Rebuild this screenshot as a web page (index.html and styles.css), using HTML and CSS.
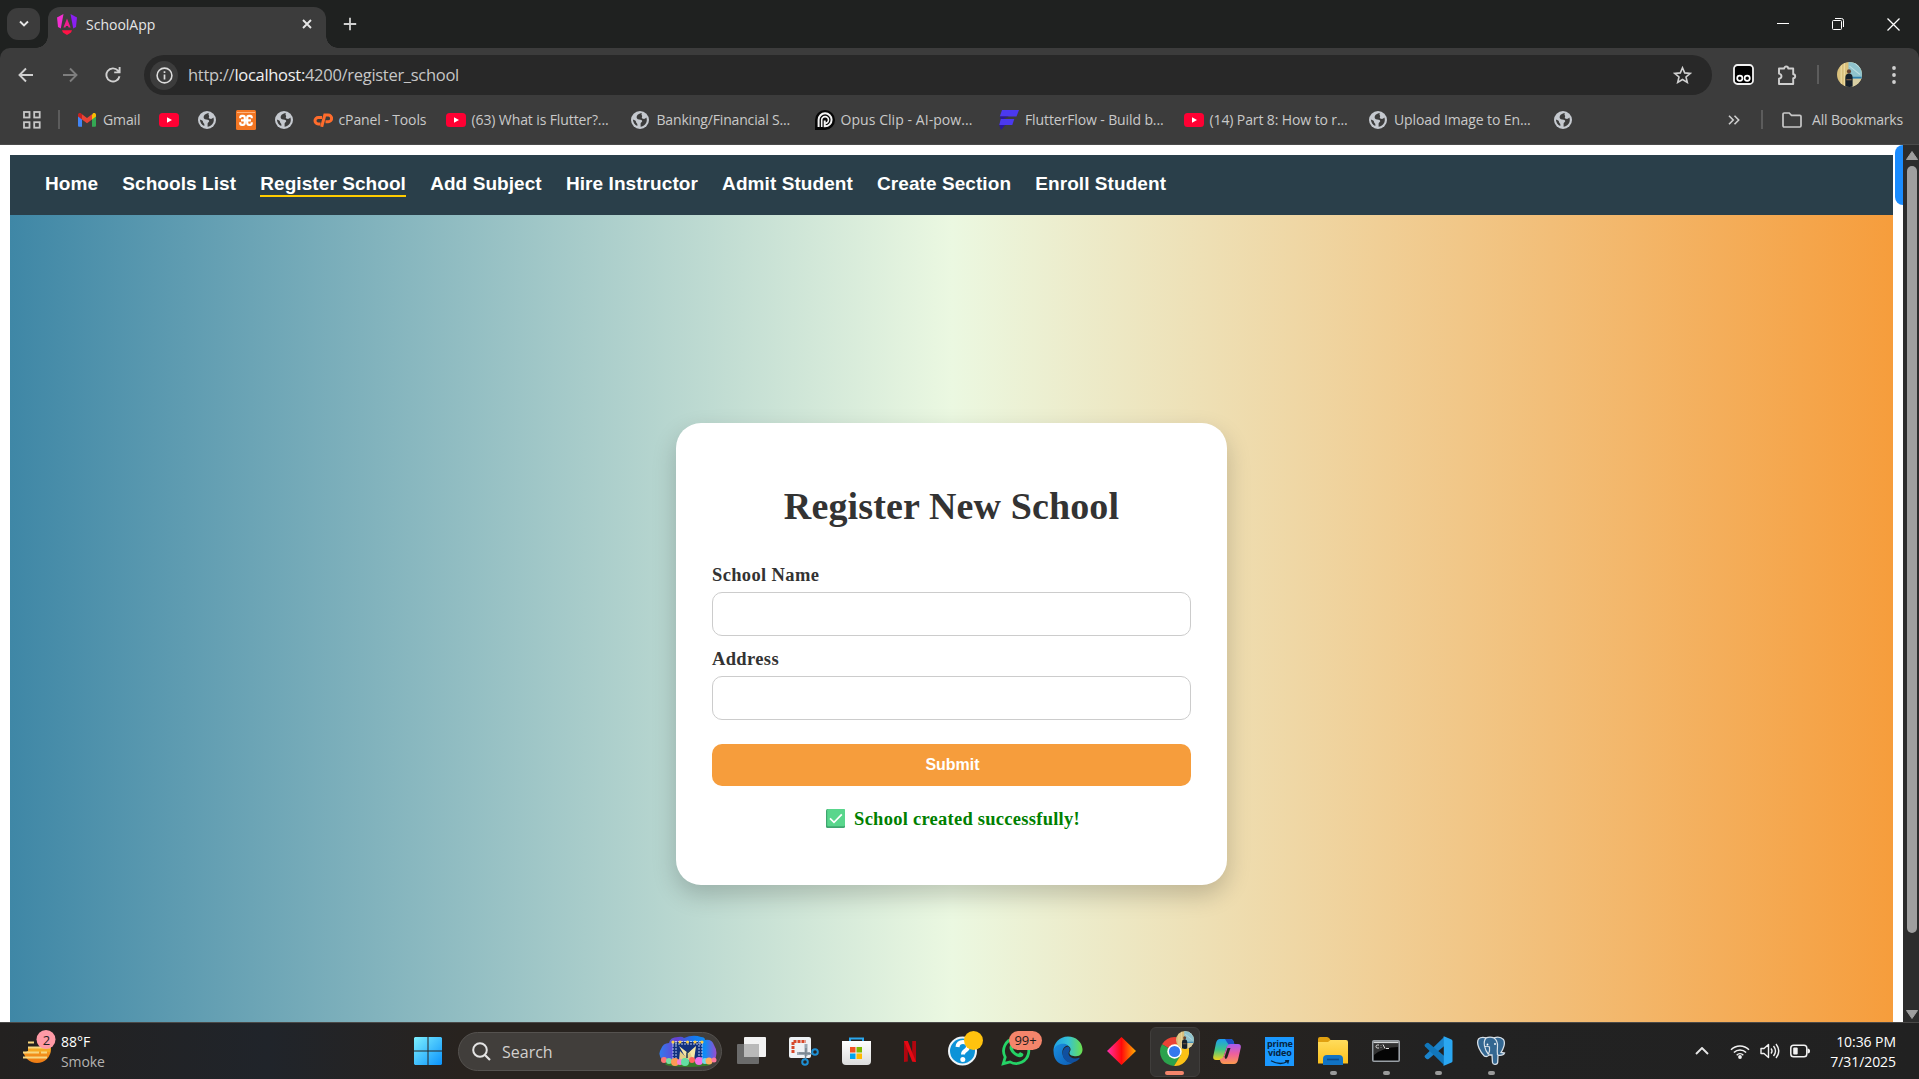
FILE: index.html
```html
<!DOCTYPE html>
<html lang="en">
<head>
<meta charset="utf-8">
<title>SchoolApp</title>
<link rel="stylesheet" href="styles.css">
</head>
<body>
<svg width="0" height="0" class="defs" aria-hidden="true">
  <defs>
    <linearGradient id="ang" x1="0" y1="0" x2="1" y2="0"><stop offset="0" stop-color="#f637d8"/><stop offset=".5" stop-color="#e0219b"/><stop offset="1" stop-color="#7a1df5"/></linearGradient>
    <linearGradient id="win" x1="0" y1="0" x2="1" y2="1"><stop offset="0" stop-color="#7df0ff"/><stop offset="1" stop-color="#0a92fb"/></linearGradient>
    <linearGradient id="sun" x1="0" y1="0" x2="0" y2="1"><stop offset="0" stop-color="#fbc22c"/><stop offset="1" stop-color="#ee7a14"/></linearGradient>
    <linearGradient id="kite" x1="0" y1="0" x2="1" y2="0"><stop offset="0" stop-color="#ff2fae"/><stop offset=".5" stop-color="#ff0a0a"/><stop offset="1" stop-color="#ffb000"/></linearGradient>
    <linearGradient id="cloud" x1="0" y1="0" x2="1" y2="0"><stop offset="0" stop-color="#2f7bef"/><stop offset=".3" stop-color="#6a3fd0"/><stop offset=".6" stop-color="#1479ee"/><stop offset=".8" stop-color="#0f8cf5"/><stop offset="1" stop-color="#9a4bd0"/></linearGradient>
    <linearGradient id="edgeTop" x1="0" y1="0" x2="1" y2="0"><stop offset="0" stop-color="#1f9fe4"/><stop offset=".5" stop-color="#35c1d8"/><stop offset="1" stop-color="#6ce04b"/></linearGradient>
    <linearGradient id="edgeLow" x1="0" y1="0" x2="1" y2="1"><stop offset="0" stop-color="#1a8fe0"/><stop offset="1" stop-color="#0d5cb5"/></linearGradient>
    <linearGradient id="copL" x1="0" y1="0" x2="0" y2="1"><stop offset="0" stop-color="#1d9bf0"/><stop offset=".5" stop-color="#3cc48a"/><stop offset="1" stop-color="#f2d21c"/></linearGradient>
    <linearGradient id="copR" x1="0" y1="0" x2="0" y2="1"><stop offset="0" stop-color="#a75cf0"/><stop offset=".5" stop-color="#ef5f9c"/><stop offset="1" stop-color="#fb9a4e"/></linearGradient>
    <linearGradient id="fold" x1="0" y1="0" x2="0" y2="1"><stop offset="0" stop-color="#ffdc5c"/><stop offset="1" stop-color="#fbc01d"/></linearGradient>
    <linearGradient id="bag" x1="0" y1="0" x2="0" y2="1"><stop offset="0" stop-color="#fff"/><stop offset="1" stop-color="#dcdcdc"/></linearGradient>
    <symbol id="globe" viewBox="0 0 18 18"><circle cx="9" cy="9" r="9" fill="#c5c9cf"/><path d="M9.500 2.200C7.200 3 5.600 4.300 5.600 6.200c0 2 2.200 2.200 4 2.500 1.300.2 1.900.9 1.500 1.900-.3.9-1.500 1-1.500 2.200v2.900c3.500-.5 6.200-3.300 6.200-6.800 0-.9-.2-1.700-.5-2.400-.8 1.100-1.900 1.600-3.200 1.300-1.400-.3-1.500-1.500-1-2.400.4-.8-.6-1-.6-1.900 0-.6.3-1 .6-1.300z M1.900 8.600c.1 3 1.800 5.300 4.400 6.500.2-1.200.2-2-.6-2.800-1-.9-.4-2.200-1.500-2.700-.8-.4-1.600-.5-2.300-1z" fill="#3c3c3c"/></symbol>
    <symbol id="yt" viewBox="0 0 20 14"><rect width="20" height="14" rx="3.500" fill="#ff0033"/><path d="M8 4.200v5.600L13 7z" fill="#fff"/></symbol>
    <symbol id="person" viewBox="0 0 24 24"><clipPath id="pc"><circle cx="12" cy="12" r="12"/></clipPath><g clip-path="url(#pc)"><rect width="24" height="24" fill="#d9c07c"/><path d="M4 0v24M7 0v24" stroke="#f0dfa8"/><rect x="11" width="13" height="16" fill="#8fc3cd"/><path d="M12 4l10 8M16 0l8 7" stroke="#b9dde0"/><rect x="13" y="16" width="11" height="8" fill="#d8cfa4"/><path d="M14 15h10" stroke="#2f7fae" stroke-width="1.500"/><circle cx="11.500" cy="9" r="2" fill="#6a4530"/><path d="M8 24v-9c0-3 1.500-4 3.500-4s3.500 1 3.500 4v9z" fill="#16202b"/><path d="M9 17h5" stroke="#946b4b"/></g></symbol>
  </defs>
</svg>

<header class="chrome">
  <div class="tabstrip">
    <button class="tab-search"><svg width="12" height="8" viewBox="0 0 12 8"><path d="M2 1.500l4 4 4-4" class="ln2"/></svg></button>
    <div class="tab">
      <svg width="20" height="21" viewBox="0 0 20 21"><path d="M0 3.500L6.500 0 3.800 14.500 1 13z" fill="#f32fd0"/><path d="M20 3.500L13.500 0l2.700 14.500L19 13z" fill="#8a1ff2"/><path d="M10 4.500l3.600 9h-2l-.6-1.600H9l-.6 1.600h-2z" fill="#f01e8c"/><path d="M5 16.200h10l-1 2.300L10 21l-4-2.500z" fill="#ff1245"/></svg>
      <span class="tab-title">SchoolApp</span>
      <svg width="10" height="10" viewBox="0 0 10 10" class="tab-close"><path d="M1 1l8 8M9 1L1 9" class="ln2"/></svg>
    </div>
    <svg width="14" height="14" viewBox="0 0 14 14" class="new-tab"><path d="M7 .8v12.400M.8 7h12.400" fill="none" stroke="#d0d0d0" stroke-width="1.800"/></svg>
    <div class="win-controls">
      <svg width="12" height="12" viewBox="0 0 12 12"><path d="M0 5.500h12" class="ln1"/></svg>
      <svg width="12" height="12" viewBox="0 0 12 12"><rect x=".5" y="2.500" width="9" height="9" rx="1" class="ln1"/><path d="M3 .5h6.500a2 2 0 0 1 2 2V9" class="ln1"/></svg>
      <svg width="13" height="13" viewBox="0 0 13 13"><path d="M.5.500l12 12M12.500.500l-12 12" class="ln1 bright"/></svg>
    </div>
  </div>

  <div class="toolbar">
    <div class="slot"><svg width="16" height="16" viewBox="0 0 16 16"><path d="M15 8H1.800M8 1.500L1.500 8 8 14.500" fill="none" stroke="#d0d0d0" stroke-width="1.900"/></svg></div>
    <div class="slot"><svg width="16" height="16" viewBox="0 0 16 16"><path d="M1 8h13.200M8 1.500L14.500 8 8 14.500" fill="none" stroke="#7e7e7e" stroke-width="1.900"/></svg></div>
    <div class="slot reload"><svg width="16" height="16" viewBox="0 0 16 16"><path d="M14.500 9.200A6.600 6.600 0 1 1 13 3.600l1.500 1.600M14.600 0v5.400H9.200" fill="none" stroke="#d0d0d0" stroke-width="1.900"/></svg></div>
    <div class="omnibox">
      <span class="info"><svg width="17" height="17" viewBox="0 0 17 17"><circle cx="8.500" cy="8.500" r="7.400" fill="none" stroke="#dcdcdc" stroke-width="1.600"/><path d="M8.500 7.500v5M8.500 4.300v1.800" stroke="#dcdcdc" stroke-width="1.700"/></svg></span>
      <span class="url">http://<b>localhost:</b>4200/register_school</span>
      <svg width="19" height="18" viewBox="0 0 19 18" class="star"><path d="M9.500 1.800l2.200 5.100 5.500.5-4.200 3.600 1.300 5.400-4.800-2.900-4.800 2.900L6 11 1.800 7.400l5.500-.5z" fill="none" stroke="#d0d0d0" stroke-width="1.600"/></svg>
    </div>
    <div class="slot"><svg width="21" height="21" viewBox="0 0 21 21"><rect x="1" y="1" width="19" height="19" rx="3.500" fill="#000" stroke="#f2f2f2" stroke-width="1.800"/><circle cx="6.800" cy="14.200" r="2.600" fill="none" stroke="#fff" stroke-width="1.700"/><circle cx="14.200" cy="14.200" r="2.600" fill="none" stroke="#fff" stroke-width="1.700"/></svg></div>
    <div class="slot"><svg width="20" height="20" viewBox="0 0 20 20"><path d="M2 3.500h5.200a2 2 0 0 1 4 0h5V9.200a2 2 0 0 1 0 4V19H2v-5.200c3.300-.6 3.300-4.600 0-5.200z" fill="none" stroke="#cfcfcf" stroke-width="1.900" stroke-linejoin="round"/></svg></div>
    <div class="slot sepslot"><i class="vsep"></i></div>
    <div class="slot avslot"><svg width="25" height="25"><use href="#person"/></svg></div>
    <div class="slot menuslot"><svg width="4" height="18" viewBox="0 0 4 18"><g fill="#d0d0d0"><circle cx="2" cy="2" r="1.900"/><circle cx="2" cy="9" r="1.900"/><circle cx="2" cy="16" r="1.900"/></g></svg></div>
  </div>

  <div class="bookmarks">
    <svg width="18" height="18" viewBox="0 0 18 18" class="apps"><g fill="none" stroke="#c7c7c7" stroke-width="1.800"><rect x="1" y="1" width="5.500" height="5.500"/><rect x="11.200" y="1" width="5.500" height="5.500"/><rect x="1" y="11.200" width="5.500" height="5.500"/><rect x="11.200" y="11.200" width="5.500" height="5.500"/></g></svg>
    <i class="vsep"></i>
    <ul>
      <li><svg width="20" height="20" viewBox="0 0 20 20"><path d="M1 4.500v11c0 .8.500 1.300 1.300 1.300H5V8z" fill="#4285f4"/><path d="M19 4.500v11c0 .8-.5 1.300-1.300 1.300H15V8z" fill="#34a853"/><path d="M15 4.800V9.500l4-3V5c0-1.800-2-2.400-3.200-1.400z" fill="#fbbc04"/><path d="M5 9.500V4.300l5 3.800 5-3.800v5.200l-5 3.800z" fill="#ea4335"/><path d="M1 5c0-1.800 2-2.400 3.200-1.400l.8.700v5.200l-4-3z" fill="#c5221f"/></svg><span class="gm">Gmail</span></li>
      <li><svg width="20" height="14"><use href="#yt"/></svg></li>
      <li><svg width="20" height="18"><use href="#globe"/></svg></li>
      <li><svg width="20" height="20" viewBox="0 0 20 20"><rect width="20" height="20" rx="1.500" fill="#f37623"/><path d="M1 2.500h18" stroke="#ffb27c" stroke-width="1"/><path d="M4.300 8.300V7.300Q4.300 5.800 5.800 5.800H7Q8.800 5.800 8.800 7.800v5q0 2-1.800 2H5.800q-1.500 0-1.500-1.500v-1M5 10.300h10M15.700 8.300V7.300q0-1.500-1.500-1.500H13q-1.800 0-1.800 2v5q0 2 1.800 2h1.200q1.500 0 1.500-1.500v-1" fill="none" stroke="#fff" stroke-width="2.200"/></svg></li>
      <li><svg width="20" height="18"><use href="#globe"/></svg></li>
      <li><svg width="20" height="14" viewBox="0 0 20 14"><g fill="none" stroke="#ff6c2c" stroke-width="3"><path d="M9 4.500H5.200a3.200 3.200 0 0 0 0 6.400h2.300"/><path d="M8.700 13.800L11.800 2h3.400a3.300 3.300 0 0 1 0 6.800h-2.700"/></g></svg><span class="cp">cPanel - Tools</span></li>
      <li><svg width="20" height="14"><use href="#yt"/></svg><span class="wide">(63) What is Flutter?...</span></li>
      <li><svg width="20" height="18"><use href="#globe"/></svg><span class="wide tight">Banking/Financial S...</span></li>
      <li><svg width="20" height="20" viewBox="0 0 20 20"><path d="M0 20V10a10 10 0 1 1 10 10z" fill="#060606"/><path d="M3.600 17V9.800a6.500 6.500 0 1 1 6.500 6.500H9.700V10.500" fill="none" stroke="#f4f4f4" stroke-width="2"/><path d="M6.700 17V10a3.400 3.400 0 1 1 3.400 3.400" fill="none" stroke="#f4f4f4" stroke-width="1.600"/></svg><span class="wide loose">Opus Clip - AI-pow...</span></li>
      <li><svg width="20" height="20" viewBox="0 0 20 20"><path d="M3 0h17l-2.500 6.500H.8z" fill="#4b39ef"/><path d="M1.800 9h13.500l-2 6H.2z" fill="#4b39ef"/><path d="M.8 6.500h9L4 9H1.800zM.2 15h6L2 20z" fill="#2a1799"/></svg><span class="wide">FlutterFlow - Build b...</span></li>
      <li><svg width="20" height="14"><use href="#yt"/></svg><span class="wide">(14) Part 8: How to r...</span></li>
      <li><svg width="20" height="18"><use href="#globe"/></svg><span class="wide">Upload Image to En...</span></li>
      <li><svg width="20" height="18"><use href="#globe"/></svg></li>
    </ul>
    <svg width="12" height="10" viewBox="0 0 12 10" class="more"><path d="M1 .8L5.200 5 1 9.200M6.500.800L10.700 5l-4.200 4.200" fill="none" stroke="#cfcfcf" stroke-width="1.600"/></svg>
    <i class="vsep"></i>
    <svg width="20" height="16" viewBox="0 0 20 16" class="folder"><path d="M1 2.200Q1 1 2.200 1h5l2.300 2.300h8.300q1.200 0 1.200 1.200v9.300q0 1.200-1.200 1.200H2.200Q1 15 1 13.800z" fill="none" stroke="#c7c7c7" stroke-width="1.700"/></svg>
    <span class="all">All Bookmarks</span>
  </div>
</header>

<div class="viewport">
  <div class="page">
    <nav class="nav">
      <a>Home</a><a>Schools List</a><a class="active">Register School</a><a>Add Subject</a><a>Hire Instructor</a><a>Admit Student</a><a>Create Section</a><a>Enroll Student</a>
    </nav>
    <main class="hero">
      <form class="card">
        <h1>Register New School</h1>
        <label for="name">School Name</label>
        <input id="name" type="text">
        <label for="addr">Address</label>
        <input id="addr" type="text">
        <button type="button">Submit</button>
        <p class="msg"><svg width="19" height="19" viewBox="0 0 19 19"><rect width="19" height="19" rx="1.500" fill="#3fa56f"/><rect x="1.200" width="17.800" height="17.200" rx="1.200" fill="#59d68c"/><path d="M4 9.300l4 4 7.800-8" fill="none" stroke="#fff" stroke-width="1.700"/></svg><span>School created successfully!</span></p>
      </form>
    </main>
  </div>
  <i class="side-tab"></i>
  <div class="scrollbar">
    <svg width="12" height="9" viewBox="0 0 12 9"><path d="M6 .5L11.500 8.500H.500z" fill="#9f9f9f" stroke="#9f9f9f" stroke-linejoin="round"/></svg>
    <i class="thumb"></i>
    <svg width="12" height="9" viewBox="0 0 12 9"><path d="M6 8.500L11.500.500H.500z" fill="#9f9f9f" stroke="#9f9f9f" stroke-linejoin="round"/></svg>
  </div>
</div>

<footer class="taskbar">
  <div class="weather">
    <svg width="36" height="36" viewBox="0 0 36 36"><circle cx="16" cy="19" r="14" fill="url(#sun)"/><path d="M0 4h26v14H7v4H0z" fill="#232120"/><path d="M14 17h15.500l-.5 5H5z" fill="#f5a823"/><path d="M7 12.500h6M7 17.500h22M2 22.500h16M20 22.500h6M2 27.500h24" stroke="#f7d780" stroke-width="2.200"/><circle cx="25" cy="9.500" r="9.500" fill="#ff9aa6"/></svg>
    <span class="count">2</span>
    <div class="wtext"><span>88°F</span><span class="dim">Smoke</span></div>
  </div>
  <div class="start"><svg width="28" height="28" viewBox="0 0 28 28"><path d="M1 0h12.500v13.500H0V1zM14.500 0H27l1 1v12.500H14.500zM0 14.500h13.500V28H1l-1-1zM14.500 14.500H28V27l-1 1H14.500z" fill="url(#win)"/></svg></div>
  <div class="search">
    <svg width="19" height="19" viewBox="0 0 19 19"><circle cx="8" cy="8" r="6.800" fill="none" stroke="#e4e4e4" stroke-width="2"/><path d="M13 13l5 5" stroke="#e4e4e4" stroke-width="2.200"/></svg>
    <span>Search</span>
    <svg width="58" height="32" viewBox="0 0 58 32" class="show"><path d="M4 26Q-2 20 2 14q2-6 8-6 1-6 9-6 4-1 6 1Q34-1 42 2q4 0 4 3 7-1 9 5 5 8 0 16z" fill="url(#cloud)"/><path d="M14 7h29v18H14z" fill="#10307e"/><path d="M14 7v18M17 7v18M40 7v18M43 7v18M13 6.500h31M13 9h31" stroke="#b6c4ea" stroke-width="1" stroke-dasharray="2 1"/><path d="M28 25L20 11l9 7 8-7-2 14z" fill="#f6e6a4"/><path d="M20 25l1-9 5 5 5-4 3 8z" fill="#e4cf86"/><path d="M28 23v-5l3-3" stroke="#203a50" stroke-width="1.500" fill="none"/><g fill="#ffce45"><circle cx="14" cy="7" r="1.600"/><circle cx="21" cy="7" r="1.500"/><circle cx="28.500" cy="7" r="1.500"/><circle cx="36" cy="7" r="1.500"/><circle cx="43" cy="7" r="1.600"/></g><ellipse cx="29" cy="29" rx="23" ry="3" fill="#377c2a"/><circle cx="5" cy="25" r="3" fill="#ff7676"/><circle cx="10" cy="26" r="3" fill="#77e0a0"/><circle cx="16" cy="27" r="4" fill="#ff9a55"/><circle cx="21" cy="27" r="3" fill="#f77fd6"/><circle cx="26" cy="27" r="4" fill="#63e0a2"/><circle cx="33" cy="25" r="3" fill="#ff675b"/><circle cx="40" cy="26" r="4" fill="#f272e8"/><circle cx="46" cy="26" r="3" fill="#72d9e8"/><circle cx="50" cy="26" r="3.500" fill="#ffb05e"/><circle cx="55" cy="25" r="2.500" fill="#ff789c"/></svg>
  </div>
  <div class="apps-row">
    <div class="app"><svg width="29" height="28" viewBox="0 0 29 28"><rect y="7" width="22" height="20" rx="1" fill="#6b6b6b"/><rect x="7" width="22" height="20" rx="1" fill="#f2f2f2"/><path d="M7 7h15v13H7z" fill="#b9b9b9"/></svg></div>
    <div class="app"><svg width="30" height="30" viewBox="0 0 30 30"><rect x="0" y="1" width="22" height="21" rx="2" fill="#eef1f4"/><path d="M4 17V5.500h13" fill="none" stroke="#d8482a" stroke-width="3" stroke-dasharray="3 1"/><path d="M8 17.500h13M17 8v12" stroke="#9aa7b2" stroke-width="3"/><path d="M10 17l13 .8M17 12l-.5 11" stroke="#7b8791" stroke-width="1.500"/><circle cx="26" cy="16" r="2.800" fill="none" stroke="#1d8fd4" stroke-width="2"/><circle cx="16" cy="26" r="2.800" fill="none" stroke="#1d8fd4" stroke-width="2"/></svg></div>
    <div class="app"><svg width="29" height="28" viewBox="0 0 29 28"><path d="M8 6V1.500h13V6" fill="none" stroke="#2aa7ee" stroke-width="2"/><path d="M0 4h29v20q0 4-4 4H4q-4 0-4-4z" fill="url(#bag)"/><path d="M8 10h5.500v5.500H8z" fill="#f25022"/><path d="M14.500 10H20v5.500h-5.500z" fill="#7fba00"/><path d="M8 16.500h5.500V22H8z" fill="#00a4ef"/><path d="M14.500 16.500H20V22h-5.500z" fill="#ffb900"/></svg></div>
    <div class="app"><svg width="12" height="21" viewBox="0 0 12 21"><path d="M0 0h3.800v20.500L0 21zM8.200 0H12v21l-3.800-.5z" fill="#b1060f"/><path d="M0 0h3.800L12 21l-3.800-.5z" fill="#e50914"/></svg></div>
    <div class="app help"><svg width="36" height="36" viewBox="0 0 36 36"><circle cx="15.500" cy="20" r="13.500" fill="#0c93d8" stroke="#eef4f8" stroke-width="2"/><path d="M10.500 16q.5-5 5.500-5 5 0 5 4.500 0 2.500-2.500 4-2.500 1.500-2.500 4" fill="none" stroke="#fff" stroke-width="4"/><circle cx="15.800" cy="28.500" r="2.500" fill="#fff"/><circle cx="26.500" cy="9.500" r="9.500" fill="#ffc20e"/></svg></div>
    <div class="app"><svg width="30" height="30" viewBox="0 0 30 30"><path d="M2.300 27.700l1.900-6.600A12.600 12.600 0 1 1 9 25.900z" fill="none" stroke="#25d366" stroke-width="2.800"/><path d="M10 8.500c1-.8 2-.6 2.400.4l.9 2.100c.3.800-.9 1.600-1.100 2.200 1 2 2.600 3.600 4.900 4.500.8-.3 1.500-1.900 2.300-1.500l2.400 1.200c1 .5.600 2.400-.6 3.200-1.500 1-3.400.9-5.800-.3-3-1.500-5-3.600-6.300-6.300-1-2.200-.6-4.300.9-5.500z" fill="#25d366"/></svg><span class="badge">99+</span></div>
    <div class="app"><svg width="30" height="30" viewBox="0 0 30 30"><path d="M29.500 13C29 6 23 .5 15 .5 6.500.500.500 7 .500 15c3-6.500 13-9 16.500-3.500 1.500 2.500-.5 4-.5 5.500 0 2.500 3 3.200 6.500 3.200 4.500 0 6.700-3.200 6.500-7.200z" fill="url(#edgeTop)"/><path d="M.5 15C1.500 8 11.500 6 15 9.500c-4 .5-6 4-5.500 8 .6 6 6 10 11.500 8.500C13 32 .5 29 .5 15z" fill="url(#edgeLow)"/><path d="M15 10.500c-5.500 1-6.500 7-4.300 11.500 3.300 6.500 11.800 5.500 15.800.5.500-.7 0-1-.7-.7-4.300 1.700-9.300.2-10.300-3.800-.3-1.500 1-2.500 1.300-4 .2-1.500-.5-3.500-1.800-3.500z" fill="#10509f"/></svg></div>
    <div class="app"><svg width="29" height="28" viewBox="0 0 29 28"><path d="M14.500 0L29 14 14.500 28 0 14z" fill="url(#kite)"/></svg></div>
    <div class="app on"><svg width="29" height="29" viewBox="0 0 29 29"><path d="M14.500 14.500L2 7.200A14.500 14.500 0 0 1 27 7.200z" fill="#ea4335"/><path d="M14.500 14.500L2 7.200A14.500 14.500 0 0 0 14 29l7-11z" fill="#2ba24c"/><path d="M14.500 7.200H27.100A14.500 14.500 0 0 1 14 29l6.800-11z" fill="#fbc116"/><circle cx="14.500" cy="14.500" r="7.200" fill="#fff"/><circle cx="14.500" cy="14.500" r="5.600" fill="#3478ee"/></svg><svg width="18" height="18" class="who"><use href="#person"/></svg></div>
    <div class="app"><svg width="28" height="25" viewBox="0 0 28 25"><path d="M7 0h10q3 0 3.800 3l.7 3h-4q-3 0-4 3l-3 9q-1 3-4 3H3q-3.500 0-2.700-4L3 4q1-4 4-4z" fill="url(#copL)"/><path d="M12 0h5q3 0 3.800 3l.7 3h-4q-2 0-3-2z" fill="#1c4fc4"/><path d="M21 25H11q-3 0-3.800-3l-.5-2q3 0 4-3l3-9q1-3 4-3H25q3.500 0 2.700 4L25 21q-1 4-4 4z" fill="url(#copR)"/><path d="M11.500 18l3-9h3l-3 9q-.8 2-2 2z" fill="#232120"/></svg></div>
    <div class="app"><div class="prime"><span>prime</span><span>video</span><svg width="20" height="5" viewBox="0 0 20 5"><path d="M1 .8q9 5 16.500.7M15 .8l3.500-.3-.8 3" fill="none" stroke="#06243f" stroke-width="1.300"/></svg></div></div>
    <div class="app run"><svg width="30" height="28" viewBox="0 0 30 28"><path d="M0 2q0-2 2-2h7q1.500 0 2.500 1.500L12.500 3H15v8H0z" fill="#e0a010"/><path d="M2 5h8l2.500-2H28q2 0 2 2v21.500H0V5z" fill="url(#fold)"/><path d="M5 28v-6q0-4 4-4h12q4 0 4 4v6z" fill="#1173c4"/><path d="M9 22.500h12" stroke="#0a4c8c" stroke-width="1.600"/></svg></div>
    <div class="app run"><svg width="28" height="22" viewBox="0 0 28 22"><rect x=".8" y=".8" width="26.400" height="20.400" rx="1" fill="#050505" stroke="#9aa0a6" stroke-width="1.600"/><path d="M2 2h24v5Q12 7 2 15z" fill="#333"/><path d="M1.500 2.300h25" stroke="#d5d8da" stroke-width="1.600"/><path d="M7 5H5.500q-1.500 0-1.500 1.500T5.500 8H7M9 5v.5M9 7.500V8M11 4.500l2 4M14 8.500h3" fill="none" stroke="#ddd"/></svg></div>
    <div class="app run"><svg width="30" height="30" viewBox="0 0 30 30"><path d="M21 1L2 19.500q-1 1 0 2l1.600 1.400q1 .8 2 0L22.500 9z" fill="#1b84cc"/><path d="M21 29L2 10.500q-1-1 0-2l1.600-1.400q1-.8 2 0L22.500 21z" fill="#1177bb"/><path d="M21.500.500L28.500 3.500q1 .5 1 1.500v20q0 1-1 1.500l-7 3q-1 .3-1.500-.5.800.3.800-1V2Q20.800.700 20 1q.5-.8 1.500-.5z" fill="#2aa7f2"/></svg></div>
    <div class="app run"><svg width="30" height="30" viewBox="0 0 30 30"><path d="M2.500 3Q5 .500 10 1.800q4-1.500 8 0Q24 0 27.500 3.500c1.500 2.500.5 8-2.500 13l3.500.5c-1 2.500-4 2.500-6.500 2.200l-.3 7c-.2 2.500-4.700 3-5.200.3L16 19h-3c-1 1.500-2 2-4.500 1.200C5 17-.5 8 2.500 3z" fill="#336791" stroke="#d7e0e8" stroke-width="1.300"/><path d="M10 2q-2.500 3-1.500 8t4 8.500M18 2q4 3 3.500 8.500T21.500 19M8.500 11q2-1.500 5 0 .5 4-1 7" fill="none" stroke="#d7e0e8" stroke-width="1.200"/><circle cx="11.500" cy="8.500" r=".9" fill="#fff"/><circle cx="19" cy="8" r=".9" fill="#fff"/></svg></div>
  </div>
  <div class="tray">
    <svg width="14" height="8" viewBox="0 0 14 8"><path d="M1 7l6-6 6 6" class="ln2"/></svg>
    <svg width="20" height="15" viewBox="0 0 20 15" class="wifi"><g fill="none" stroke="#f2f2f2" stroke-width="1.500"><path d="M1 5.800a12.700 12.700 0 0 1 18 0M3.900 8.500a8.700 8.700 0 0 1 12.200 0M6.700 11.200a4.700 4.700 0 0 1 6.600 0"/></g><circle cx="10" cy="13" r="1.900" fill="#f2f2f2"/></svg>
    <svg width="20" height="16" viewBox="0 0 20 16" class="vol"><g fill="none" stroke="#f2f2f2" stroke-width="1.400"><path d="M1 5.500h3L8.500 1.500v13L4 10.500H1z" stroke-linejoin="round"/><path d="M11 5.500q2 2.500 0 5M13.500 3q4 5 0 10M16 1q5.500 7 0 14"/></g></svg>
    <svg width="20" height="14" viewBox="0 0 20 14" class="bat"><rect x=".8" y="1.200" width="16" height="11.500" rx="2.800" fill="none" stroke="#f2f2f2" stroke-width="1.500"/><rect x="3.200" y="3.500" width="4.500" height="7" rx="1" fill="#f2f2f2"/><path d="M17.500 4.500q2.500 0 2.500 2.500t-2.500 2.500z" fill="#f2f2f2"/></svg>
    <div class="clock"><span>10:36 PM</span><span>7/31/2025</span></div>
  </div>
</footer>
</body>
</html>
```
FILE: styles.css
```css
* { box-sizing: border-box; }
body {
  margin: 0;
  width: 1919px;
  height: 1079px;
  overflow: hidden;
  display: flex;
  flex-direction: column;
  font-family: "Open Sans", "Noto Sans", sans-serif;
  font-size: 14px;
  color: #c9c9c9;
  background: #fff;
}
svg { display: block; flex: none; }
.defs { position: absolute; }
.ln1 { fill: none; stroke: #fff; stroke-width: 1; }
.bright { stroke-width: 1.300; }
.ln2 { fill: none; stroke: #e6e6e6; stroke-width: 1.900; }

/* Browser chrome */
.chrome { height: 145px; flex: none; background: #1f2120; display: flex; flex-direction: column; }
.tabstrip { height: 48px; display: flex; align-items: center; padding-left: 7px; }
.tab-search {
  width: 33px; height: 32px; padding: 0; border: 0; border-radius: 11px;
  background: #3c3c3c; display: flex; align-items: center; justify-content: center;
}
.tab {
  position: relative; align-self: flex-end; width: 278px; height: 41px; margin-left: 8px;
  padding: 0 14px 7px 9px; border-radius: 12px 12px 0 0; background: #3c3c3c;
  display: flex; align-items: center;
}
.tab::before, .tab::after { content: ""; position: absolute; bottom: 0; width: 12px; height: 12px; }
.tab::before { left: -12px; background: radial-gradient(circle at 0 0, transparent 11.500px, #3c3c3c 12px); }
.tab::after { right: -12px; background: radial-gradient(circle at 100% 0, transparent 11.500px, #3c3c3c 12px); }
.tab-title { margin-left: 9px; color: #e6e6e6; }
.tab-close { margin-left: auto; }
.new-tab { margin-left: 17px; }
.win-controls { margin-left: auto; display: flex; gap: 43px; padding-right: 19px; align-items: center; }

.toolbar {
  height: 53px; padding-left: 4px; display: flex; align-items: center;
  background: #3c3c3c; border-radius: 10px 10px 0 0;
}
.slot { width: 44px; display: flex; justify-content: center; flex: none; }
.reload { width: 42px; }
.sepslot { width: 17px; }
.avslot { width: 47px; }
.menuslot { width: 41px; margin-right: 5px; }
.vsep { width: 2px; height: 19px; background: #5c5c5c; flex: none; }
.omnibox {
  flex: 1; height: 40px; margin: 1px 9px 0 10px; padding: 0 20px 0 6px; border-radius: 20px;
  background: #282828; display: flex; align-items: center;
}
.info {
  width: 28px; height: 29px; border-radius: 50%; background: #3c3c3c;
  display: flex; align-items: center; justify-content: center;
}
.url { margin: 0 0 2px 10px; font-size: 16.500px; letter-spacing: -.290px; color: #c7c7c7; white-space: nowrap; }
.url b { font-weight: 400; color: #f0f0f0; }
.star { margin-left: auto; }

.bookmarks {
  flex: 1; padding: 0 16px 6px 23px; background: #3c3c3c; border-bottom: 1px solid #4b4b4b;
  display: flex; align-items: center;
}
.bookmarks span { letter-spacing: -.110px; white-space: nowrap; }
.apps { margin-right: 17px; }
.bookmarks ul { list-style: none; margin: 0 auto 0 17px; padding: 0; display: flex; gap: 18.500px; }
.bookmarks li { display: flex; align-items: center; gap: 6px; height: 24px; }
.bookmarks .gm { width: 37px; }
.bookmarks .cp { width: 88.500px; }
.bookmarks .wide { width: 140px; }
.bookmarks .tight { letter-spacing: -.170px; padding-left: .5px; }
.bookmarks .loose { letter-spacing: .060px; }
.more { margin-right: 21px; }
.folder { margin: 0 10px 0 19px; }
.bookmarks .all { letter-spacing: -.180px; }

/* Web page */
.viewport { height: 877px; flex: none; display: flex; background: #fff; overflow: hidden; }
.page { width: 1883px; flex: none; margin: 10px 0 0 10px; display: flex; flex-direction: column; }
.nav {
  height: 60px; flex: none; padding: 18px 35px; background: #2a3f4a;
  display: flex; align-items: flex-start; gap: 24.200px;
  font: bold 19px/22px "Liberation Sans", Arial, sans-serif; letter-spacing: .070px; color: #fff;
}
.nav .active { border-bottom: 2px solid #ffcc00; }
.hero { flex: 1; padding-top: 208px; background: linear-gradient(to right, #3f87a6, #ebf8e1, #f69d3c); }
.card {
  width: 551px; height: 462px; margin: 0 auto; padding: 61px 36px 0; border-radius: 25px;
  background: #fff; box-shadow: 0 10px 25px rgba(0, 0, 0, .2);
  display: flex; flex-direction: column;
  font-family: "Liberation Serif", "Times New Roman", serif; color: #333;
}
.card h1 { margin: 0 0 36px; font-size: 38px; line-height: 44px; text-align: center; letter-spacing: .130px; }
.card label { font-size: 18.500px; line-height: 22px; font-weight: bold; letter-spacing: .360px; margin-bottom: 6px; }
.card input { height: 44px; margin: 0 0 12px; border: 1px solid #ccc; border-radius: 10px; background: #fff; }
.card button {
  height: 42px; margin: 12px 0 22px; padding-left: 8px; border: 0; border-radius: 10px; background: #f69d3c;
  font: bold 16px "Liberation Sans", Arial, sans-serif; color: #fff;
}
.msg {
  margin: 0; padding-left: 3px; display: flex; justify-content: center; gap: 9px;
  font-size: 18.500px; line-height: 22px; font-weight: bold; letter-spacing: .260px; color: green;
}
.msg svg { margin-top: 1px; }
.side-tab { width: 8px; height: 60px; margin-left: 2px; border-radius: 8px 0 0 8px; background: #1a8cff; }
.scrollbar {
  width: 16px; padding: 6px 0 3px 1px; background: #2c2c2c;
  display: flex; flex-direction: column; align-items: center;
}
.thumb { width: 10px; height: 767px; margin: 6px 0 auto; border-radius: 5px; background: #9f9f9f; }

/* Taskbar */
.taskbar {
  height: 57px; flex: none; border-top: 1px solid #4a4948; color: #fff;
  background: linear-gradient(90deg, #232120, #20242a 14%, #28231f 24%, #28231f 60%, #222 75%, #212121);
  display: flex; align-items: center;
}
.weather { position: relative; width: 380px; padding-left: 21px; display: flex; align-items: center; gap: 4px; }
.weather > svg { margin-bottom: 6px; }
.count {
  position: absolute; left: 37px; top: 1px; width: 19px; line-height: 19px;
  text-align: center; font-size: 13px; color: #222;
}
.wtext, .clock { display: flex; flex-direction: column; line-height: 20px; padding-top: 2px; }
.dim { color: #b4b2b1; letter-spacing: -.100px; }
.start { margin-left: 34px; }
.search {
  width: 264px; height: 39px; margin-left: 16px; padding: 0 4px 0 13px; border-radius: 20px;
  background: #413e3b; border: 1px solid #55524f;
  display: flex; align-items: center; font-size: 16px; color: #d2d0ce;
}
.search span { margin: 1px 0 0 11px; }
.show { margin-left: auto; }
.apps-row { display: flex; margin-left: 2.800px; height: 56px; }
.app { position: relative; width: 52.860px; display: flex; align-items: center; justify-content: center; }
.help { padding-left: 4px; padding-bottom: 4px; }
.on::before {
  content: ""; position: absolute; z-index: -1; left: 2px; top: 4px; width: 48px; height: 48px;
  border-radius: 6px; background: #343230; border: 1px solid #403e3c;
}
.app.on { z-index: 0; }
.who { position: absolute; left: 28px; top: 8px; }
.on::after, .run::after {
  content: ""; position: absolute; bottom: 4px; left: 50%; width: 7px; height: 4px;
  margin-left: -3px; border-radius: 2px; background: #9a9a9a;
}
.on::after { width: 19px; margin-left: -9.500px; background: #f4856b; }
.badge {
  position: absolute; left: 20px; top: 8px; width: 33px; height: 19px; border-radius: 9.500px;
  background: #f4856b; color: #1b1b1b; font-size: 13px; line-height: 19px; text-align: center;
}
.prime {
  width: 29px; height: 29px; padding-top: 2px; background: #1a98ff; color: #06243f;
  font: bold 9px/9px "Open Sans", sans-serif; letter-spacing: -.200px;
  display: flex; flex-direction: column; align-items: center;
}
.prime svg { margin-top: 3px; }
.tray { margin-left: auto; padding-right: 23px; display: flex; align-items: center; }
.wifi { margin-left: 21px; }
.vol, .bat { margin-left: 10px; }
.clock { width: 86px; text-align: right; letter-spacing: -.060px; }
```
